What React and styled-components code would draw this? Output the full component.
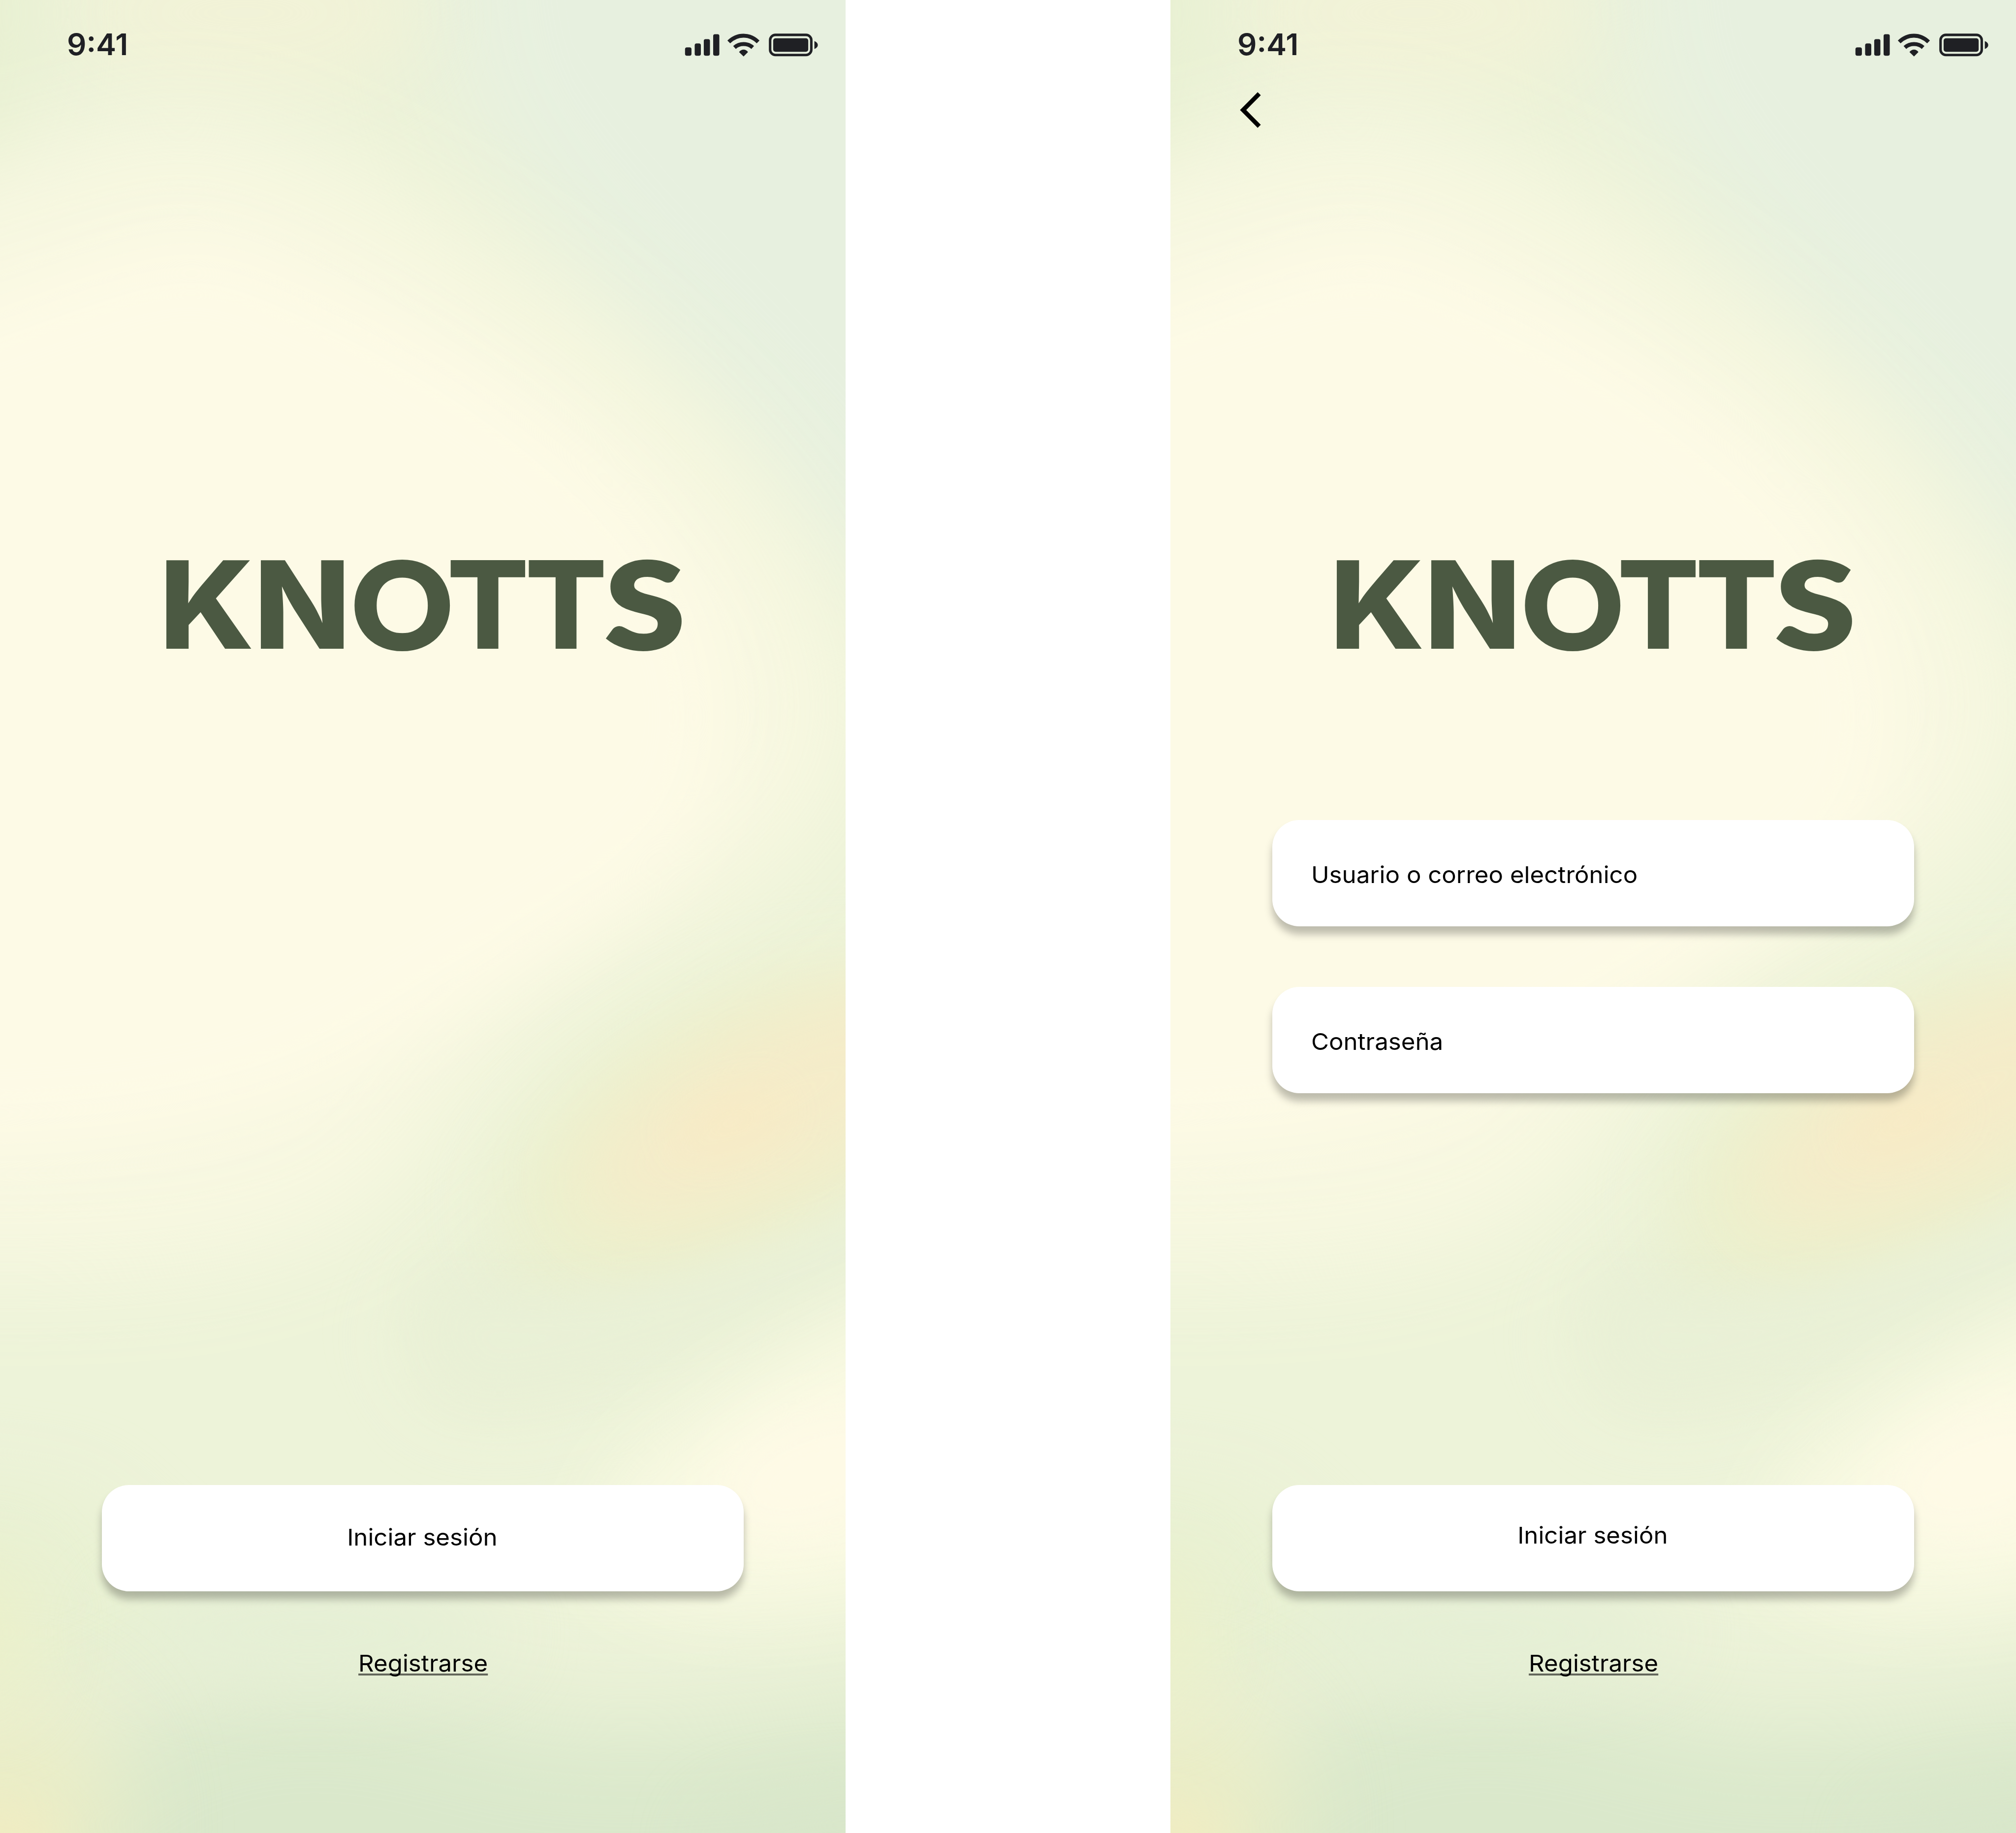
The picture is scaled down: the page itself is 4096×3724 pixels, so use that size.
import React from "react";
import styled, { createGlobalStyle } from "styled-components";

const GlobalStyle = createGlobalStyle`
  *, *::before, *::after { box-sizing: border-box; }
  body { margin: 0; background: #ffffff; }
`;

const Page = styled.div`
  display: flex;
  justify-content: space-between;
  width: 4096px;
  height: 3724px;
  overflow: hidden;
  background: #ffffff;
  font-family: Inter, "Liberation Sans", sans-serif;
`;

const Phone = styled.section`
  position: relative;
  isolation: isolate;
  display: flex;
  flex-direction: column;
  width: 1718px;
  height: 3724px;
  padding-bottom: 315px;
  overflow: hidden;
`;

const Backdrop = styled.svg`
  position: absolute;
  inset: 0;
  z-index: -1;
  width: 100%;
  height: 100%;
`;

const StatusBar = styled.header`
  display: flex;
  align-items: center;
  justify-content: space-between;
  height: 180px;
  padding: 0 55px 0 136px;
  color: #1f2024;
`;

const Clock = styled.time`
  font-size: 60px;
  font-weight: 600;
  line-height: 72px;
  transform: scaleX(1.028);
  transform-origin: left center;
`;

const Indicators = styled.div`
  display: flex;
  padding-top: 3px;
`;

const Indicator = styled.svg`
  display: block;
  width: ${(p) => p.$width}px;
  height: 48.3px;
  margin-left: ${(p) => p.$gap || 0}px;
`;

const NavRow = styled.nav`
  height: 100px;
  padding: 6px 0 0 139.4px;
`;

const BackButton = styled.button`
  display: block;
  padding: 0;
  border: 0;
  background: none;
  color: #000000;
`;

const Chevron = styled.svg`
  display: block;
  width: 46.2px;
  height: 75px;
`;

const Logo = styled.h1`
  display: flex;
  align-items: baseline;
  height: 260px;
  margin: 814.3px 0 0;
  padding-left: 336.5px;
  color: #4b5942;
  line-height: 260px;
`;

const Letter = styled.span`
  flex: none;
  display: block;
  width: ${(p) => p.$width}px;
  margin-right: ${(p) => p.$gap}px;
  text-indent: ${(p) => -p.$bearing}px;
  white-space: nowrap;
  font-family: ${(p) => (p.$round ? "Lato" : "Inter")}, sans-serif;
  font-size: ${(p) => (p.$round ? 243 : 247)}px;
  font-weight: ${(p) => (p.$round ? 900 : 800)};
  -webkit-text-stroke: ${(p) => (p.$round ? "6px #4b5942" : "0")};
  transform: scaleX(${(p) => p.$stretch});
  transform-origin: left center;
`;

const Form = styled.form`
  display: flex;
  flex-direction: column;
  gap: 123.4px;
  margin: 312px 207px 0;
`;

const surface = `
  display: flex;
  align-items: center;
  width: 1304px;
  height: 215.6px;
  border: 0;
  border-radius: 55px;
  background: #ffffff;
  box-shadow: 0 16px 16px rgba(0, 0, 0, 0.25);
  color: #000000;
  font-family: inherit;
  font-size: 47px;
  line-height: 60px;
`;

const Field = styled.label`
  ${surface}
  padding: 6.5px 0 0 79px;
`;

const PrimaryButton = styled.button`
  ${surface}
  justify-content: center;
  padding: 0 2px ${(p) => p.$lift}px 0;
`;

const Wide = styled.span`
  display: inline-block;
  white-space: nowrap;
  transform: scaleX(1.047);
  transform-origin: ${(p) => (p.$fromLeft ? "left" : "center")} center;
`;

const Actions = styled.footer`
  display: flex;
  flex-direction: column;
  align-items: center;
  gap: 116.5px;
  margin-top: auto;
`;

const RegisterLink = styled.a`
  color: #000000;
  font-size: 47px;
  line-height: 60px;
  height: 60px;
  padding-left: 2px;

  ${Wide} {
    text-decoration: underline;
    text-decoration-color: #63675b;
    text-decoration-thickness: 4px;
    text-decoration-skip-ink: none;
    text-underline-offset: 4px;
  }
`;

const letters = [
  { char: "K", width: 174, gap: 18.5, bearing: 13, stretch: 1.061 },
  { char: "N", width: 170, gap: 20.5, bearing: 13, stretch: 1.043 },
  { char: "O", width: 195, gap: 0.2, bearing: 4.8, stretch: 1.038, round: true },
  { char: "T", width: 153.3, gap: 5.4, bearing: 7, stretch: 1 },
  { char: "T", width: 153.3, gap: 4.7, bearing: 7, stretch: 1 },
  { char: "S", width: 154.5, gap: 0, bearing: 0.9, stretch: 1.202, round: true },
];

function Wordmark() {
  return (
    <Logo>
      {letters.map((l, i) => (
        <Letter
          key={i}
          $width={l.width}
          $gap={l.gap}
          $bearing={l.bearing}
          $stretch={l.stretch}
          $round={l.round}
        >
          {l.char}
        </Letter>
      ))}
    </Logo>
  );
}

function MeshBackdrop({ id }) {
  const soft = (n) => `url(#${id}-soft-${n})`;
  return (
    <Backdrop viewBox="0 0 657 1426" preserveAspectRatio="none" aria-hidden="true">
      <defs>
        {[18, 28, 40].map((n) => (
          <filter
            key={n}
            id={`${id}-soft-${n}`}
            filterUnits="userSpaceOnUse"
            x="-400"
            y="-400"
            width="1457"
            height="2226"
            colorInterpolationFilters="sRGB"
          >
            <feGaussianBlur stdDeviation={n} />
          </filter>
        ))}
      </defs>
      <rect width="657" height="1426" fill="#edf3d9" />
      <path d="M330 -200 L900 -200 L900 560 L650 430 C560 300 400 190 350 60 Z" fill="#e7f0df" filter={soft(40)} />
      <ellipse cx="190" cy="10" rx="130" ry="60" fill="#f1f2d7" filter={soft(28)} />
      <ellipse cx="-20" cy="10" rx="50" ry="130" fill="#e8f0d2" filter={soft(28)} />
      <path
        d="M-200 170 C-40 160 60 95 150 92 C240 105 340 170 450 245 C570 340 655 440 665 550 C665 640 590 690 490 745 C390 800 350 860 300 930 C200 1000 60 995 -200 985 Z"
        fill="#faf9e3"
        filter={soft(40)}
        opacity="0.85"
      />
      <path
        d="M-200 280 C-20 260 80 180 170 186 C300 235 410 300 490 385 C560 460 585 560 548 635 C505 705 405 750 320 805 C220 875 80 905 -200 885 Z"
        fill="#fdfae6"
        filter={soft(28)}
      />
      <ellipse cx="440" cy="1010" rx="130" ry="70" transform="rotate(-25 440 1010)" fill="#e9f0d5" filter={soft(28)} />
      <ellipse cx="575" cy="880" rx="200" ry="100" transform="rotate(-27 575 880)" fill="#ecf0cd" filter={soft(28)} />
      <ellipse cx="600" cy="860" rx="165" ry="62" transform="rotate(-27 600 860)" fill="#f5ecc9" filter={soft(28)} />
      <ellipse cx="568" cy="873" rx="45" ry="18" transform="rotate(-20 568 873)" fill="#f9eac4" filter={soft(18)} opacity="0.8" />
      <path d="M330 1000 C450 1030 560 990 700 930 L700 985 C580 1030 480 1075 360 1080 Z" fill="#e9f0d6" filter={soft(18)} />
      <path d="M-200 1130 L60 1160 L180 1270 L60 1320 L-200 1300 Z" fill="#e9f1d3" filter={soft(28)} />
      <path d="M-100 1500 L100 1340 C230 1280 300 1310 420 1340 C560 1350 640 1330 900 1290 L900 1700 L-100 1700 Z" fill="#dae8cb" filter={soft(40)} />
      <ellipse cx="240" cy="1270" rx="150" ry="40" fill="#e5efd5" filter={soft(28)} />
      <path d="M800 980 C680 1010 560 1075 490 1140 C450 1195 450 1225 510 1245 C600 1265 690 1245 800 1210 Z" fill="#fafae3" filter={soft(28)} opacity="0.9" />
      <ellipse cx="635" cy="1145" rx="85" ry="50" transform="rotate(-20 635 1145)" fill="#fefae6" filter={soft(18)} />
      <ellipse cx="0" cy="1420" rx="90" ry="100" fill="#ebedc6" filter={soft(40)} />
      <ellipse cx="-15" cy="1270" rx="40" ry="60" fill="#ebf0ca" filter={soft(28)} />
      <ellipse cx="-5" cy="1440" rx="50" ry="35" fill="#f0ecc2" filter={soft(18)} />
      <ellipse cx="660" cy="1440" rx="110" ry="40" fill="#d8e6ca" filter={soft(28)} />
    </Backdrop>
  );
}

function StatusIndicators() {
  return (
    <Indicators>
      <Indicator $width={73.3} viewBox="166 106 246 162" fill="currentColor">
        <rect x="172" y="204" width="44" height="57" rx="13" />
        <rect x="238" y="177" width="42" height="84" rx="13" />
        <rect x="300" y="148" width="42" height="113" rx="12" />
        <rect x="364" y="114" width="42" height="147" rx="12" />
      </Indicator>
      <Indicator $width={64.4} $gap={14.9} viewBox="462 106 216 162" fill="none" stroke="currentColor">
        <path d="M471 167 C528 110 614 110 671 167" strokeWidth="27" />
        <path d="M510 205 C544 174 600 174 634 205" strokeWidth="27" />
        <path d="M541 236 C558 214 586 214 602 236 L572 266 Z" fill="currentColor" stroke="none" />
      </Indicator>
      <Indicator $width={100.7} $gap={19.7} viewBox="743 106 338 162" fill="currentColor">
        <rect x="752" y="119" width="281" height="137" rx="36" fill="none" stroke="currentColor" strokeWidth="17" />
        <rect x="773" y="142" width="239" height="92" rx="16" />
        <path d="M1054 161 C1085 172 1085 204 1054 215 Z" />
      </Indicator>
    </Indicators>
  );
}

function Screen({ id, showBack, lift, children }) {
  return (
    <Phone>
      <MeshBackdrop id={id} />
      <StatusBar>
        <Clock>9:41</Clock>
        <StatusIndicators />
      </StatusBar>
      <NavRow>
        {showBack && (
          <BackButton type="button" aria-label="Volver">
            <Chevron viewBox="470 505 155 252" fill="none" stroke="currentColor" strokeWidth="30">
              <path d="M609 520 L499 631 L609 742" />
            </Chevron>
          </BackButton>
        )}
      </NavRow>
      <Wordmark />
      {children}
      <Actions>
        <PrimaryButton type="button" $lift={lift}>
          <Wide>Iniciar sesión</Wide>
        </PrimaryButton>
        <RegisterLink>
          <Wide>Registrarse</Wide>
        </RegisterLink>
      </Actions>
    </Phone>
  );
}

export default function App() {
  return (
    <>
      <GlobalStyle />
      <Page>
        <Screen id="welcome" lift={2.5} />
        <Screen id="login" lift={10.5} showBack>
          <Form>
            <Field>
              <Wide $fromLeft>Usuario o correo electrónico</Wide>
            </Field>
            <Field>
              <Wide $fromLeft>Contraseña</Wide>
            </Field>
          </Form>
        </Screen>
      </Page>
    </>
  );
}
